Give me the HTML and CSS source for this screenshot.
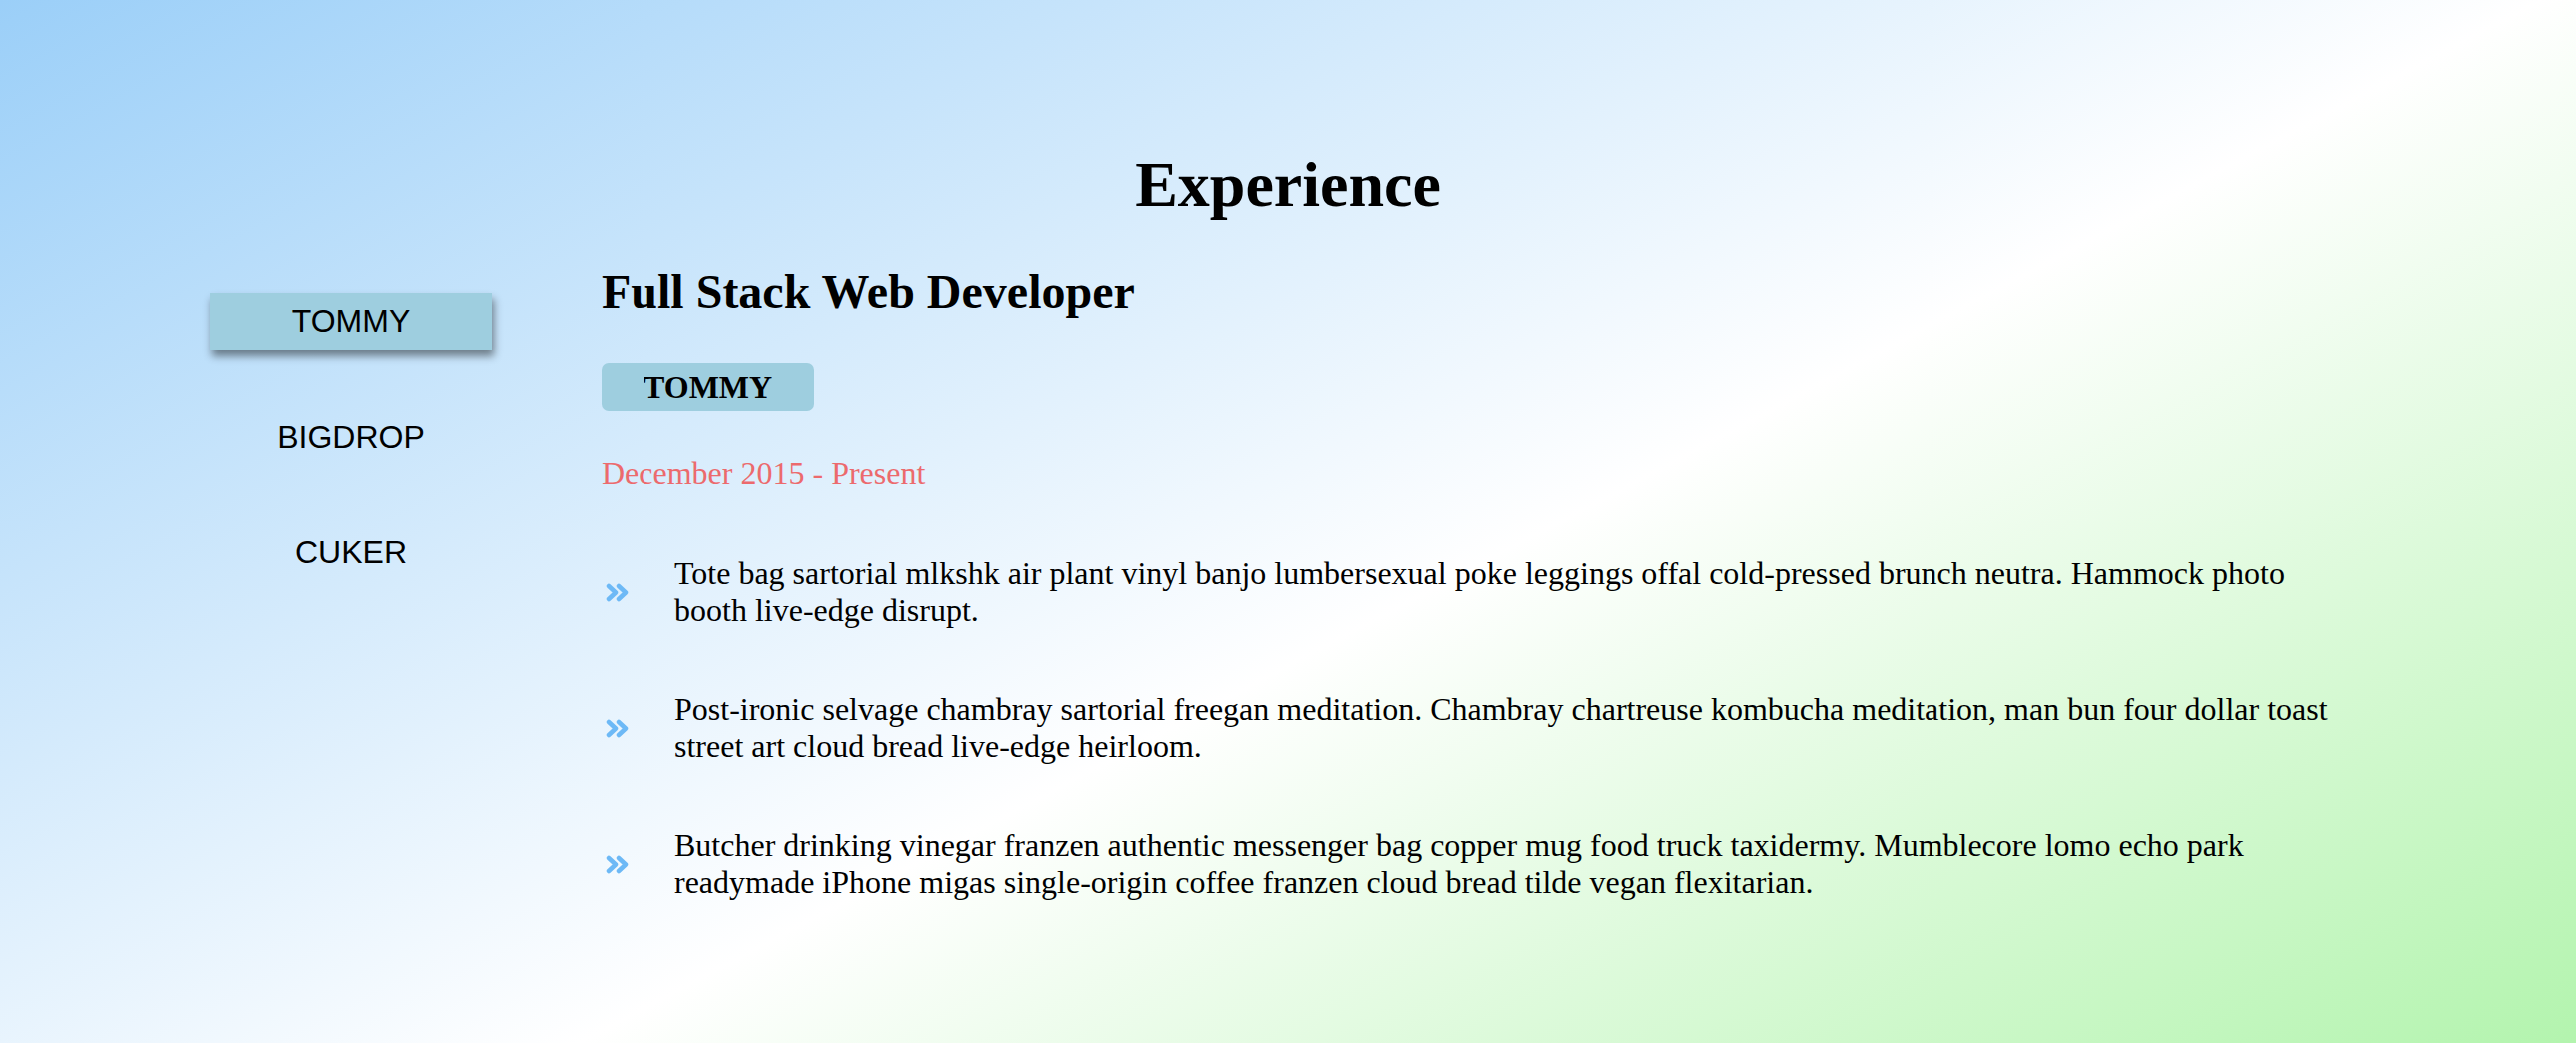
FILE: index.html
```html
<!DOCTYPE html>
<html lang="en">
<head>
<meta charset="utf-8">
<title>Experience</title>
<link rel="stylesheet" href="styles.css">
</head>
<body>
<section class="experience">
  <h1 class="title">Experience</h1>
  <div class="layout">
    <nav class="tabs">
      <button class="tab tab-active">TOMMY</button>
      <button class="tab">BIGDROP</button>
      <button class="tab">CUKER</button>
    </nav>
    <div class="job">
      <h2 class="job-title">Full Stack Web Developer</h2>
      <div class="company">TOMMY</div>
      <p class="dates">December 2015 - Present</p>
      <ul class="duties">
        <li class="duty">
          <svg class="chev" viewBox="0 0 24 19" aria-hidden="true"><path d="M3 3 L10 9.5 L3 16 M13 3 L20 9.5 L13 16"/></svg>
          <span class="duty-text">Tote bag sartorial mlkshk air plant vinyl banjo lumbersexual poke leggings offal cold-pressed brunch neutra. Hammock photo booth live-edge disrupt.</span>
        </li>
        <li class="duty">
          <svg class="chev" viewBox="0 0 24 19" aria-hidden="true"><path d="M3 3 L10 9.5 L3 16 M13 3 L20 9.5 L13 16"/></svg>
          <span class="duty-text">Post-ironic selvage chambray sartorial freegan meditation. Chambray chartreuse kombucha meditation, man bun four dollar toast street art cloud bread live-edge heirloom.</span>
        </li>
        <li class="duty">
          <svg class="chev" viewBox="0 0 24 19" aria-hidden="true"><path d="M3 3 L10 9.5 L3 16 M13 3 L20 9.5 L13 16"/></svg>
          <span class="duty-text">Butcher drinking vinegar franzen authentic messenger bag copper mug food truck taxidermy. Mumblecore lomo echo park readymade iPhone migas single-origin coffee franzen cloud bread tilde vegan flexitarian.</span>
        </li>
      </ul>
    </div>
  </div>
</section>
</body>
</html>
```

FILE: styles.css
```css
html, body {
  margin: 0;
  padding: 0;
}

body {
  min-height: 100vh;
  font-family: "Liberation Serif", "Times New Roman", serif;
  font-size: 32px;
  color: #000;
  background: linear-gradient(152deg, #9bcff8 0%, #ffffff 56%, #b3f4ae 100%);
}

.experience {
  padding-top: 148px;
  padding-bottom: 80px;
}

.title {
  margin: 0;
  font-size: 64px;
  font-weight: bold;
  line-height: normal;
  text-align: center;
}

.layout {
  display: grid;
  grid-template-columns: 282px 1fr;
  column-gap: 110px;
  padding: 0 228px 0 210px;
  margin-top: 42px;
}

.tabs {
  display: flex;
  flex-direction: column;
  gap: 59px;
  padding-top: 29px;
}

.tab {
  height: 57px;
  border: none;
  margin: 0;
  padding: 0;
  background: transparent;
  font-family: "Liberation Sans", Arial, sans-serif;
  font-size: 32px;
  line-height: normal;
  color: #000;
  text-align: center;
}

.tab-active {
  background: #9ecedf;
  box-shadow: 2px 6px 8px rgba(0, 0, 0, 0.45);
}

.job {
  display: flex;
  flex-direction: column;
  align-items: flex-start;
}

.job-title {
  margin: 0;
  font-size: 48px;
  font-weight: bold;
  line-height: normal;
}

.company {
  margin-top: 44px;
  padding: 5.6px 42px;
  background: #9ecedf;
  border-radius: 7px;
  font-weight: bold;
  line-height: normal;
}

.dates {
  margin: 44px 0 0;
  color: #ec6a6d;
  line-height: normal;
}

.duties {
  list-style: none;
  margin: 64px 0 0;
  padding: 0;
  display: flex;
  flex-direction: column;
  gap: 62px;
}

.duty {
  display: flex;
  align-items: center;
}

.chev {
  flex: none;
  width: 24px;
  height: 19px;
  margin-left: 4px;
  margin-right: 45px;
}

.chev path {
  fill: none;
  stroke: #6db9f6;
  stroke-width: 4.5;
  stroke-linecap: round;
  stroke-linejoin: round;
}

.duty-text {
  line-height: normal;
}
```
